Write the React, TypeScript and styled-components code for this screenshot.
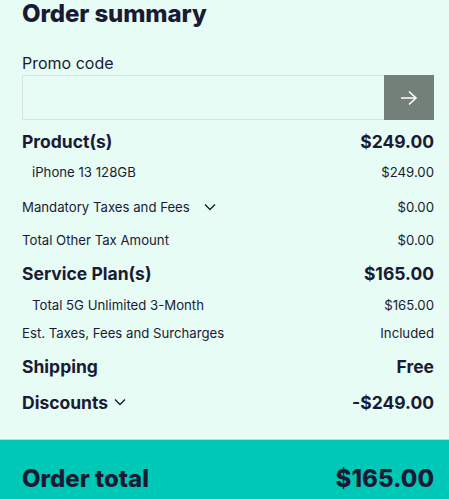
import React from "react";
import styled, {createGlobalStyle} from "styled-components";

const GlobalStyle = createGlobalStyle`
  html, body {
    margin: 0;
    padding: 0;
    background: #e6fcf4;
  }
  body {
    font-family: Inter, "Noto Sans", sans-serif;
    color: #1b1a35;
  }
`;

const Page = styled.div`
  width: 449px;
  height: 499px;
  overflow: hidden;
  display: flex;
  flex-direction: column;
  background: #e6fcf4;
`;

const Body = styled.div`
  padding: 0 15px 0 22px;
  height: 439px;
`;

const Title = styled.h1`
  margin: 0;
  font-size: 24px;
  line-height: 28px;
  font-weight: 800;
  letter-spacing: -0.1px;
`;

const Label = styled.div`
  margin-top: 25px;
  font-size: 16px;
  line-height: 20px;
`;

const PromoBox = styled.div`
  margin-top: 2px;
  height: 45px;
  display: flex;
  border: 1px solid #d9e3df;
  box-sizing: border-box;
`;

const PromoInput = styled.input`
  flex: 1;
  border: none;
  background: transparent;
  outline: none;
`;

const PromoButton = styled.button`
  width: 50px;
  margin: -1px -1px -1px 0;
  border: none;
  background: #737f79;
  display: flex;
  align-items: center;
  justify-content: center;
  padding: 0;
`;

const Rows = styled.div`
  margin-top: 6px;
`;

const Row = styled.div<{ $h: number; $indent?: boolean; $bold?: boolean }>`
  height: ${p => p.$h}px;
  display: flex;
  align-items: center;
  justify-content: space-between;
  padding-left: ${p => (p.$indent ? 10 : 0)}px;
  font-size: ${p => (p.$bold ? 17.5 : 13.2)}px;
  font-weight: ${p => (p.$bold ? 700 : 400)};
`;

const Name = styled.span`
  display: flex;
  align-items: center;
`;

const Chevron = ({gap}: { gap: number }) => (
  <svg width="12" height="8" viewBox="0 0 12 8" style={{marginLeft: gap}}>
    <path d="M1 1.5l5 5 5-5" fill="none" stroke="#1b1a35" strokeWidth="1.4"/>
  </svg>
);

const Footer = styled.div`
  flex: 1;
  background: #00c8b6;
  border-top: 1px solid #c9d3d0;
  display: flex;
  align-items: flex-end;
  justify-content: space-between;
  padding: 0 15px 6px 22px;
  font-size: 24px;
  font-weight: 800;
`;

export default function App() {
  return (
    <Page>
      <GlobalStyle/>
      <Body>
        <Title>Order summary</Title>
        <Label>Promo code</Label>
        <PromoBox>
          <PromoInput aria-label="Promo code"/>
          <PromoButton aria-label="Apply">
            <svg width="20" height="16" viewBox="0 0 20 16">
              <path d="M2 8h15M10 1.5l7 6.5-7 6.5" fill="none" stroke="#fff" strokeWidth="1.6"/>
            </svg>
          </PromoButton>
        </PromoBox>
        <Rows>
          <Row $h={30} $bold><span>Product(s)</span><span>$249.00</span></Row>
          <Row $h={32} $indent><span>iPhone 13 128GB</span><span>$249.00</span></Row>
          <Row $h={38}><Name>Mandatory Taxes and Fees<Chevron gap={14}/></Name><span>$0.00</span></Row>
          <Row $h={28}><span>Total Other Tax Amount</span><span>$0.00</span></Row>
          <Row $h={38} $bold><span>Service Plan(s)</span><span>$165.00</span></Row>
          <Row $h={26} $indent><span>Total 5G Unlimited 3-Month</span><span>$165.00</span></Row>
          <Row $h={30}><span>Est. Taxes, Fees and Surcharges</span><span>Included</span></Row>
          <Row $h={36} $bold><span>Shipping</span><span>Free</span></Row>
          <Row $h={36} $bold><Name>Discounts<Chevron gap={6}/></Name><span>-$249.00</span></Row>
        </Rows>
      </Body>
      <Footer><span>Order total</span><span>$165.00</span></Footer>
    </Page>
  );
}
